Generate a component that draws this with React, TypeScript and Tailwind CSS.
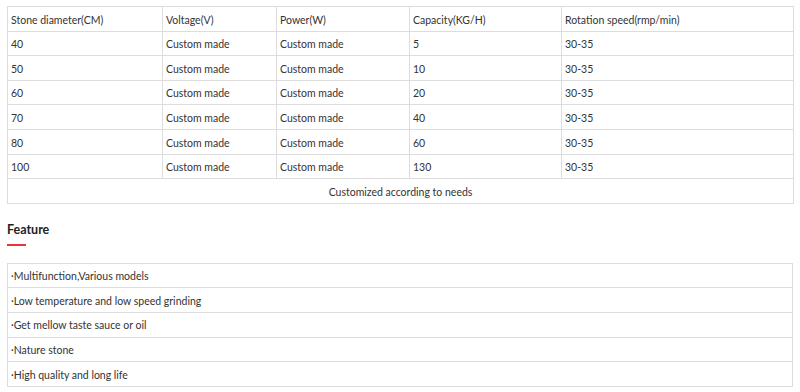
const specs = [
  ['40', '5'],
  ['50', '10'],
  ['60', '20'],
  ['70', '40'],
  ['80', '60'],
  ['100', '130'],
];

const features = [
  'Multifunction,Various models',
  'Low temperature and low speed grinding',
  'Get mellow taste sauce or oil',
  'Nature stone',
  'High quality and long life',
];

const td = 'border border-[#dddddd] px-[3px] pt-[2px] h-[24.6px] align-middle';

export default function App() {
  return (
    <div
      className="w-[800px] h-[392px] bg-white text-[#333333] text-[10.5px] leading-none overflow-hidden px-[7px] pt-[6px]"
      style={{ fontFamily: 'Lato, "Noto Sans", sans-serif' }}
    >
      <table className="w-[786px] border-collapse table-fixed">
        <colgroup>
          <col className="w-[155px]" />
          <col className="w-[114px]" />
          <col className="w-[133px]" />
          <col className="w-[152px]" />
          <col className="w-[232px]" />
        </colgroup>
        <tbody>
          <tr>
            <td className={td}>Stone diameter(CM)</td>
            <td className={td}>Voltage(V)</td>
            <td className={td}>Power(W)</td>
            <td className={td}>Capacity(KG/H)</td>
            <td className={td}>Rotation speed(rmp/min)</td>
          </tr>
          {specs.map(([d, c]) => (
            <tr key={d}>
              <td className={td}>{d}</td>
              <td className={td}>Custom made</td>
              <td className={td}>Custom made</td>
              <td className={td}>{c}</td>
              <td className={td}>30-35</td>
            </tr>
          ))}
          <tr>
            <td colSpan={5} className={td + ' text-center'}>
              Customized according to needs
            </td>
          </tr>
        </tbody>
      </table>

      {/* Feature heading */}
      <div className="mt-[20px]">
        <h3 className="text-[12.5px] font-bold text-[#222222] leading-[12px]">Feature</h3>
        <div className="mt-[8px] w-[19px] h-[2px] bg-[#e8363c]" />
      </div>

      <table className="mt-[17px] w-[786px] border-collapse">
        <tbody>
          {features.map((f) => (
            <tr key={f}>
              <td className={td}>·{f}</td>
            </tr>
          ))}
        </tbody>
      </table>
    </div>
  );
}
